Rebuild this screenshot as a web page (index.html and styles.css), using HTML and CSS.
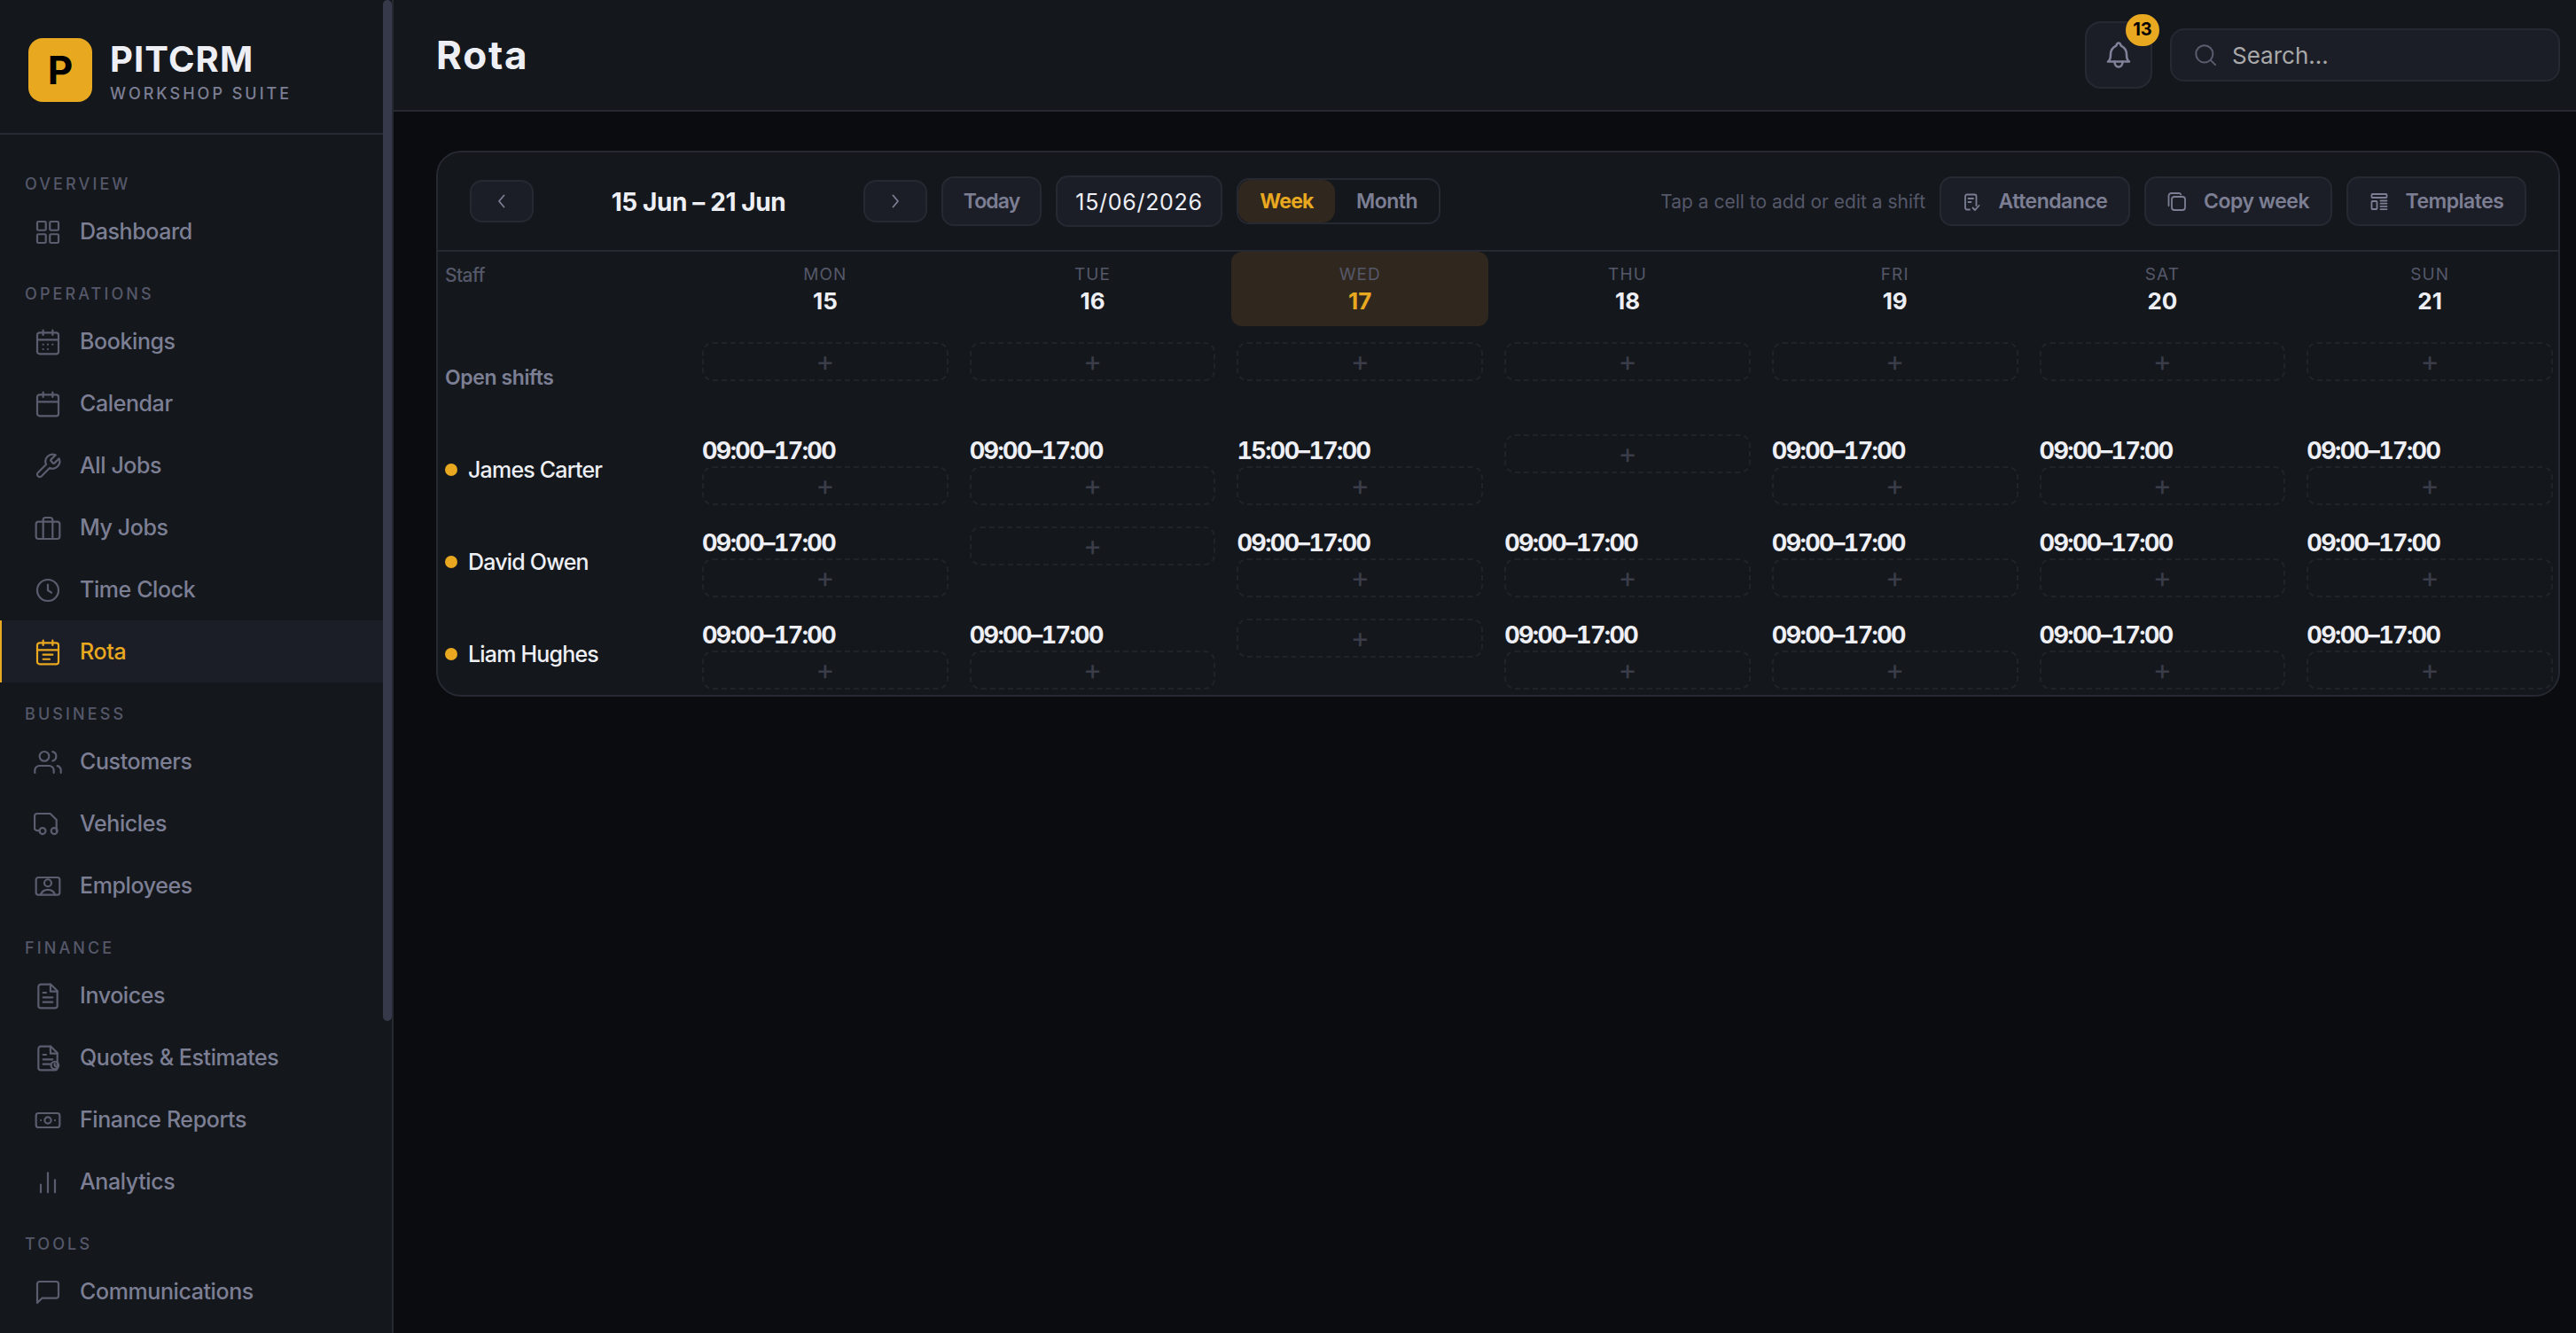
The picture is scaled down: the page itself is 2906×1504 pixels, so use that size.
FILE: index.html
```html
<!DOCTYPE html>
<html lang="en">
<head>
    <meta charset="UTF-8">
    <meta name="viewport" content="width=device-width, initial-scale=1.0">
    <title>Rota - PITCRM</title>
    <link rel="stylesheet" href="styles.css">
</head>
<body>
    <aside class="sidebar">
        <div class="sidebar-content">
            <div class="brand">
                <div class="brand-mark">P</div>
                <div class="brand-text">
                    <div class="brand-name">PITCRM</div>
                    <div class="brand-sub">WORKSHOP SUITE</div>
                </div>
            </div>
            <nav class="nav">
                <div class="nav-label">OVERVIEW</div>
                <a class="nav-item">
                    <svg class="icon" viewBox="0 0 24 24"><rect x="3" y="3" width="7.3" height="7.3" rx="1"/><rect x="13.7" y="3" width="7.3" height="7.3" rx="1"/><rect x="3" y="13.7" width="7.3" height="7.3" rx="1"/><rect x="13.7" y="13.7" width="7.3" height="7.3" rx="1"/></svg>
                    Dashboard
                </a>

                <div class="nav-label">OPERATIONS</div>
                <a class="nav-item">
                    <svg class="icon" viewBox="0 0 24 24"><rect x="3" y="4" width="18" height="18" rx="2"/><path d="M8 2v4M16 2v4M3 10h18M8 14h.01M12 14h.01M16 14h.01M8 18h.01M12 18h.01"/></svg>
                    Bookings
                </a>
                <a class="nav-item">
                    <svg class="icon" viewBox="0 0 24 24"><rect x="3" y="4" width="18" height="18" rx="2"/><path d="M8 2v4M16 2v4M3 10h18"/></svg>
                    Calendar
                </a>
                <a class="nav-item">
                    <svg class="icon" viewBox="0 0 24 24"><path d="M14.7 6.3a1 1 0 0 0 0 1.4l1.6 1.6a1 1 0 0 0 1.4 0l3.77-3.77a6 6 0 0 1-7.94 7.94l-6.91 6.91a2.12 2.12 0 0 1-3-3l6.91-6.91a6 6 0 0 1 7.94-7.94l-3.76 3.76z"/></svg>
                    All Jobs
                </a>
                <a class="nav-item">
                    <svg class="icon" viewBox="0 0 24 24"><rect x="2" y="6.5" width="20" height="14.5" rx="2"/><path d="M16 21V5a2 2 0 0 0-2-2h-4a2 2 0 0 0-2 2v16"/></svg>
                    My Jobs
                </a>
                <a class="nav-item">
                    <svg class="icon" viewBox="0 0 24 24"><circle cx="12" cy="12" r="9"/><path d="M12 7.2V12l3 2"/></svg>
                    Time Clock
                </a>
                <a class="nav-item active">
                    <svg class="icon" viewBox="0 0 24 24"><rect x="3" y="4" width="18" height="18" rx="2"/><path d="M8 2v4M16 2v4M3 10h18M8 14h8M8 17.8h5.5"/></svg>
                    Rota
                </a>

                <div class="nav-label">BUSINESS</div>
                <a class="nav-item">
                    <svg class="icon" viewBox="0 0 24 24"><path d="M17 21v-2a4 4 0 0 0-4-4H5a4 4 0 0 0-4 4v2"/><circle cx="9" cy="7" r="4"/><path d="M23 21v-2a4 4 0 0 0-3-3.87M16 3.13a4 4 0 0 1 0 7.75"/></svg>
                    Customers
                </a>
                <a class="nav-item">
                    <svg class="icon" viewBox="0 0 24 24"><path d="M5 17.3H2.8A2 2 0 0 1 .8 15.3V5a2 2 0 0 1 2-2H14l5.3 5.3v9.4"/><circle cx="7.5" cy="17.7" r="2.6"/><circle cx="17.4" cy="17.7" r="2.6"/></svg>
                    Vehicles
                </a>
                <a class="nav-item">
                    <svg class="icon" viewBox="0 0 24 24"><rect x="2" y="4.5" width="20" height="14.7" rx="2"/><circle cx="12" cy="9.2" r="3"/><path d="M6 19c.9-2.7 3.2-4.1 6-4.1s5.1 1.4 6 4.1"/></svg>
                    Employees
                </a>

                <div class="nav-label">FINANCE</div>
                <a class="nav-item">
                    <svg class="icon" viewBox="0 0 24 24"><path d="M14.5 2H6a2 2 0 0 0-2 2v16a2 2 0 0 0 2 2h12a2 2 0 0 0 2-2V7.5z"/><path d="M14.2 2v6H20M16 13H8M16 17H8M10.5 9H8"/></svg>
                    Invoices
                </a>
                <a class="nav-item">
                    <svg class="icon" viewBox="0 0 24 24"><path d="M14.5 2H6a2 2 0 0 0-2 2v16a2 2 0 0 0 2 2h12a2 2 0 0 0 2-2V7.5z"/><path d="M14.2 2v6H20M16 13H8M14 17H8M10.5 9H8"/><circle cx="17.9" cy="18" r="3.2"/><path d="M17.7 16.5v1.7l1.2 1"/></svg>
                    Quotes &amp; Estimates
                </a>
                <a class="nav-item">
                    <svg class="icon" viewBox="0 0 24 24"><rect x="2" y="6" width="20" height="12" rx="2"/><circle cx="12" cy="12" r="2.7"/><path d="M6 12h.01M18 12h.01"/></svg>
                    Finance Reports
                </a>
                <a class="nav-item">
                    <svg class="icon" viewBox="0 0 24 24"><path d="M6 20.5V14M12 20.5V4M18 20.5V10"/></svg>
                    Analytics
                </a>

                <div class="nav-label">TOOLS</div>
                <a class="nav-item">
                    <svg class="icon" viewBox="0 0 24 24"><path d="M21 15a2 2 0 0 1-2 2H7l-4 4V5a2 2 0 0 1 2-2h14a2 2 0 0 1 2 2z"/></svg>
                    Communications
                </a>
            </nav>
        </div>
        <div class="scroll-track"><div class="scroll-thumb"></div></div>
    </aside>

    <div class="page">
        <header class="topbar">
            <h1 class="title">Rota</h1>
            <div class="bell">
                <svg class="bell-icon" viewBox="0 0 32 32"><path d="M4 23.5H28C25.6 22 25 19.5 25 15.5 25 10.5 22.5 7.5 18.7 5.7 18 3.2 17 2.5 16 2.5S14 3.2 13.3 5.7C9.5 7.5 7 10.5 7 15.5 7 19.5 6.4 22 4 23.5Z"/><path d="M11.5 23.5c0 3.8 2 6 4.5 6s4.5-2.2 4.5-6"/></svg>
                <span class="badge">13</span>
            </div>
            <div class="search">
                <svg class="search-icon" viewBox="0 0 24 24"><circle cx="11" cy="11" r="8.2"/><path d="M21.5 21.5l-4.5-4.5"/></svg>
                <span>Search...</span>
            </div>
        </header>

        <main class="card">
            <div class="toolbar">
                <div class="arrow-btn"><svg viewBox="0 0 24 24"><path d="M14.5 18.5l-5.500-6.500 5.500-6.500"/></svg></div>
                <div class="range">15 Jun – 21 Jun</div>
                <div class="arrow-btn"><svg viewBox="0 0 24 24"><path d="M9.5 18.5l5.500-6.500-5.500-6.500"/></svg></div>
                <div class="btn today-btn">Today</div>
                <div class="date-input">15/06/2026</div>
                <div class="segment">
                    <span class="seg seg-on">Week</span>
                    <span class="seg">Month</span>
                </div>
                <div class="hint">Tap a cell to add or edit a shift</div>
                <div class="btn attendance-btn">
                    <svg viewBox="0 0 24 24"><path d="M8 21.5H5a2 2 0 0 1-2-2V6.5a2 2 0 0 1 2-2h8.5a2 2 0 0 1 2 2V17M6.5 9h5.5M6.5 13h3M11.5 19.5l2.5 2.5 4.5-5"/></svg>
                    Attendance
                </div>
                <div class="btn copy-btn">
                    <svg viewBox="0 0 24 24"><rect x="5" y="7" width="15" height="15" rx="3"/><path d="M1.5 17V6a3 3 0 0 1 3-3H13a2.5 2.5 0 0 1 2.3 1.5"/></svg>
                    Copy week
                </div>
                <div class="btn templates-btn">
                    <svg viewBox="0 0 24 24"><rect x="2.5" y="4" width="17" height="4" rx=".8"/><rect x="2.5" y="12" width="6" height="9" rx=".8"/><path d="M12.5 11.5h7M12.5 14.7h7M12.5 17.9h7M12.5 21.1h7"/></svg>
                    Templates
                </div>
            </div>

            <div class="rota">
                <div class="staff-head">Staff</div>
                <div class="day"><span class="dow">MON</span><span class="num">15</span></div>
                <div class="day"><span class="dow">TUE</span><span class="num">16</span></div>
                <div class="day today"><span class="dow">WED</span><span class="num">17</span></div>
                <div class="day"><span class="dow">THU</span><span class="num">18</span></div>
                <div class="day"><span class="dow">FRI</span><span class="num">19</span></div>
                <div class="day"><span class="dow">SAT</span><span class="num">20</span></div>
                <div class="day"><span class="dow">SUN</span><span class="num">21</span></div>

                <div class="open-label">Open shifts</div>
                <div class="cell"><div class="add">+</div></div>
                <div class="cell"><div class="add">+</div></div>
                <div class="cell"><div class="add">+</div></div>
                <div class="cell"><div class="add">+</div></div>
                <div class="cell"><div class="add">+</div></div>
                <div class="cell"><div class="add">+</div></div>
                <div class="cell"><div class="add">+</div></div>

                <div class="staff"><span class="dot"></span>James Carter</div>
                <div class="cell"><div class="shift">09:00–17:00</div><div class="add">+</div></div>
                <div class="cell"><div class="shift">09:00–17:00</div><div class="add">+</div></div>
                <div class="cell"><div class="shift">15:00–17:00</div><div class="add">+</div></div>
                <div class="cell"><div class="add">+</div></div>
                <div class="cell"><div class="shift">09:00–17:00</div><div class="add">+</div></div>
                <div class="cell"><div class="shift">09:00–17:00</div><div class="add">+</div></div>
                <div class="cell"><div class="shift">09:00–17:00</div><div class="add">+</div></div>

                <div class="staff"><span class="dot"></span>David Owen</div>
                <div class="cell"><div class="shift">09:00–17:00</div><div class="add">+</div></div>
                <div class="cell"><div class="add">+</div></div>
                <div class="cell"><div class="shift">09:00–17:00</div><div class="add">+</div></div>
                <div class="cell"><div class="shift">09:00–17:00</div><div class="add">+</div></div>
                <div class="cell"><div class="shift">09:00–17:00</div><div class="add">+</div></div>
                <div class="cell"><div class="shift">09:00–17:00</div><div class="add">+</div></div>
                <div class="cell"><div class="shift">09:00–17:00</div><div class="add">+</div></div>

                <div class="staff"><span class="dot"></span>Liam Hughes</div>
                <div class="cell"><div class="shift">09:00–17:00</div><div class="add">+</div></div>
                <div class="cell"><div class="shift">09:00–17:00</div><div class="add">+</div></div>
                <div class="cell"><div class="add">+</div></div>
                <div class="cell"><div class="shift">09:00–17:00</div><div class="add">+</div></div>
                <div class="cell"><div class="shift">09:00–17:00</div><div class="add">+</div></div>
                <div class="cell"><div class="shift">09:00–17:00</div><div class="add">+</div></div>
                <div class="cell"><div class="shift">09:00–17:00</div><div class="add">+</div></div>
            </div>
        </main>
    </div>
</body>
</html>
```
FILE: styles.css
```css
:root {
    --bg: #0b0c0f;
    --surface: #14171c;
    --raised: #1c1e27;
    --border: #262932;
    --text: #eeeff5;
    --muted: #7c7f94;
    --dim: #555869;
    --accent: #e8a820;
    --accent-soft: #30281f;
}

* {
    box-sizing: border-box;
}

body {
    margin: 0;
    display: flex;
    height: 1504px;
    overflow: hidden;
    background: var(--bg);
    color: var(--text);
    font-family: Inter, "Liberation Sans", sans-serif;
}

svg {
    fill: none;
    stroke: currentColor;
    stroke-width: 1.65;
    stroke-linecap: round;
    stroke-linejoin: round;
    flex-shrink: 0;
}

/* sidebar */
.sidebar {
    display: flex;
    flex-shrink: 0;
    width: 444px;
    height: 100%;
    background: var(--surface);
    border-right: 2px solid var(--border);
}

.sidebar-content {
    width: 432px;
    overflow: hidden;
}

.scroll-track {
    width: 10px;
}

.scroll-thumb {
    height: 1152px;
    border-radius: 5px;
    background: #363949;
}

.brand {
    display: flex;
    align-items: center;
    gap: 20px;
    height: 152px;
    padding: 8px 32px 0;
    border-bottom: 2px solid var(--border);
}

.brand-mark {
    display: flex;
    align-items: center;
    justify-content: center;
    width: 72px;
    height: 72px;
    border-radius: 16px;
    background: var(--accent);
    color: #000;
    font-size: 44px;
    font-weight: 700;
}

.brand-text {
    padding-top: 4px;
}

.brand-name {
    font-size: 40px;
    font-weight: 700;
    letter-spacing: 1.1px;
    line-height: 44px;
}

.brand-sub {
    color: var(--muted);
    font-size: 18px;
    font-weight: 500;
    letter-spacing: 3px;
    line-height: 22px;
    margin-top: 6px;
}

.nav {
    padding-top: 20px;
}

.nav-label {
    padding: 25px 28px 7px;
    color: var(--dim);
    font-size: 18px;
    font-weight: 500;
    letter-spacing: 3.1px;
    line-height: 22px;
}

.nav-item {
    display: flex;
    align-items: center;
    gap: 20px;
    height: 70px;
    padding-left: 36px;
    border-left: 2px solid transparent;
    color: var(--muted);
    font-size: 25px;
    font-weight: 500;
    letter-spacing: -0.4px;
}

.nav-item .icon {
    width: 32px;
    height: 32px;
    margin-top: 2px;
    color: #5a5d6e;
}

.nav-item.active,
.nav-item.active .icon {
    color: var(--accent);
}

.nav-item.active {
    background: var(--raised);
    border-left-color: var(--accent);
}

/* top bar */
.page {
    flex: 1;
    min-width: 0;
}

.topbar {
    display: flex;
    align-items: center;
    height: 126px;
    padding: 0 18px 0 48px;
    background: var(--surface);
    border-bottom: 2px solid var(--border);
}

.title {
    flex: 1;
    margin: 0;
    font-size: 44px;
    font-weight: 700;
    letter-spacing: 1.8px;
}

.bell {
    position: relative;
    display: flex;
    align-items: center;
    justify-content: center;
    width: 76px;
    height: 76px;
    margin-right: 20px;
    border: 2px solid var(--border);
    border-radius: 18px;
    background: var(--raised);
    color: #7f8299;
}

.bell-icon {
    width: 32px;
    height: 32px;
    stroke-width: 2.6;
}

.badge {
    position: absolute;
    top: -10px;
    right: -10px;
    width: 38px;
    height: 36px;
    border-radius: 18px;
    background: var(--accent);
    color: #000;
    font-size: 20px;
    font-weight: 700;
    line-height: 35px;
    text-align: center;
}

.search {
    display: flex;
    align-items: center;
    gap: 16px;
    width: 440px;
    height: 60px;
    padding: 0 24px;
    border: 2px solid var(--border);
    border-radius: 16px;
    background: var(--raised);
    color: #a9a9a9;
    font-size: 26px;
}

.search-icon {
    width: 28px;
    height: 28px;
    color: #5a5d6e;
    stroke-width: 1.7;
}

/* rota card */
.card {
    margin: 44px 18px 0 48px;
    border: 2px solid var(--border);
    border-radius: 28px;
    background: var(--surface);
    overflow: hidden;
}

.toolbar {
    display: flex;
    align-items: center;
    gap: 16px;
    height: 112px;
    padding: 0 36px;
    border-bottom: 2px solid var(--border);
}

.arrow-btn,
.btn,
.date-input {
    display: flex;
    align-items: center;
    justify-content: center;
    border: 2px solid var(--border);
    border-radius: 14px;
    background: var(--raised);
}

.arrow-btn {
    width: 72px;
    height: 48px;
    color: var(--muted);
}

.arrow-btn svg {
    width: 24px;
    height: 24px;
    stroke-width: 1.8;
}

.range {
    width: 340px;
    padding-top: 1px;
    font-size: 28px;
    font-weight: 700;
    letter-spacing: -0.4px;
    text-align: center;
}

.btn {
    gap: 17px;
    height: 56px;
    color: var(--muted);
    font-size: 23px;
    font-weight: 600;
    letter-spacing: -0.5px;
}

.btn svg {
    width: 24px;
    height: 24px;
    stroke-width: 1.8;
}

.today-btn {
    width: 113px;
    letter-spacing: -0.9px;
}

.attendance-btn {
    width: 215px;
}

.copy-btn {
    width: 212px;
}

.templates-btn {
    width: 203px;
}

.date-input {
    width: 188px;
    height: 58px;
    padding-top: 1px;
    font-size: 25px;
    letter-spacing: 0.7px;
}

.segment {
    display: flex;
    width: 230px;
    height: 52px;
    border: 2px solid var(--border);
    border-radius: 14px;
    overflow: hidden;
}

.seg {
    flex: 1;
    color: var(--muted);
    font-size: 23px;
    font-weight: 600;
    letter-spacing: -0.5px;
    line-height: 49px;
    text-align: center;
}

.seg-on {
    flex: none;
    width: 109px;
    border-radius: 14px;
    background: var(--accent-soft);
    color: var(--accent);
    font-weight: 700;
    letter-spacing: -0.8px;
}

.hint {
    margin-left: auto;
    padding-top: 1px;
    color: var(--dim);
    font-size: 21px;
}

.rota {
    display: grid;
    grid-template-columns: 280px repeat(7, 1fr);
    grid-template-rows: 84px repeat(4, 92px);
    gap: 12px;
}

.staff-head {
    padding: 14px 8px;
    color: var(--dim);
    font-size: 21px;
    font-weight: 500;
    letter-spacing: -0.6px;
}

.day {
    display: flex;
    flex-direction: column;
    align-items: center;
    padding-top: 13px;
    border-radius: 12px;
}

.dow {
    color: var(--dim);
    font-size: 19px;
    letter-spacing: 1.1px;
    line-height: 25px;
}

.num {
    font-size: 26px;
    font-weight: 700;
    line-height: 36px;
}

.today {
    background: var(--accent-soft);
}

.today .num {
    color: var(--accent);
}

.open-label,
.staff {
    display: flex;
    align-items: center;
    padding-left: 8px;
}

.open-label {
    color: var(--muted);
    font-size: 23px;
    font-weight: 600;
    letter-spacing: -0.4px;
}

.staff {
    gap: 12px;
    font-size: 25px;
    font-weight: 500;
    letter-spacing: -0.8px;
}

.dot {
    width: 14px;
    height: 14px;
    border-radius: 50%;
    background: var(--accent);
}

.cell {
    padding: 6px;
}

.shift {
    height: 36px;
    font-size: 27px;
    font-weight: 700;
    font-variant-numeric: tabular-nums;
    letter-spacing: -1.6px;
    line-height: 38px;
    white-space: nowrap;
}

.add {
    height: 44px;
    border: 2px dashed #20232a;
    border-radius: 12px;
    color: #3a3d49;
    font-size: 32px;
    font-weight: 400;
    line-height: 40px;
    text-align: center;
}
```
